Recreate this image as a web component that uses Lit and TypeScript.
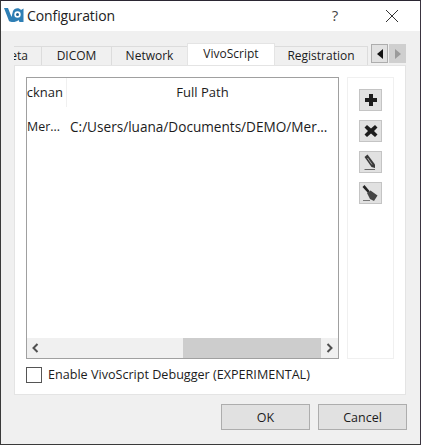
import { LitElement, html, css } from "lit";
import { customElement } from "lit/decorators.js";

@customElement("app-root")
export class AppRoot extends LitElement {
  static styles = css`
    :host { display: block; width: 421px; height: 445px; overflow: hidden; font-family: "Open Sans", "Noto Sans", sans-serif; font-size: 12px; color: #1c1c1c; }
    .win { width: 421px; height: 445px; box-sizing: border-box; background: #f0f0f0; border: 1px solid #3a3a3a; border-top-color: #2b2733; border-right-color: #3a3440; display: flex; flex-direction: column; }
    .title { height: 30px; background: #fff; display: flex; align-items: center; flex: none; padding-bottom: 2px; box-sizing: border-box; }
    .logo { width: 20px; height: 16px; margin-left: 3px; flex: none; }
    .title-text { margin-left: 3px; font-size: 14px; color: #222; flex: 1; letter-spacing: -0.1px; }
    .help { width: 14px; text-align: center; font-size: 15px; color: #444; margin-right: 43px; }
    .close { width: 14px; height: 14px; margin-right: 21px; margin-top: 2px; }
    .body { flex: 1; padding: 12px 14px 13px 13px; display: flex; flex-direction: column; min-height: 0; }
    .strip { height: 22px; display: flex; align-items: flex-end; flex: none; position: relative; }
    .tab { height: 19px; box-sizing: border-box; background: #f0f0f0; border: 1px solid #dcdcdc; border-bottom: 0; display: flex; align-items: center; justify-content: center; flex: none; margin-left: -1px; white-space: nowrap; padding-bottom: 1px; }
    .tab.first { width: 28px; margin-left: 0; border-left: 0; justify-content: flex-end; overflow: hidden; padding-right: 13px; }
    .tab.w70 { width: 71px; }
    .tab.w76 { width: 77px; }
    .tab.active { width: 88px; height: 22px; background: #fff; border-color: #e4e4e4; position: relative; z-index: 1; padding-bottom: 3px; }
    .tab.w93 { width: 94px; }
    .arrows { display: flex; gap: 1px; margin-left: 3px; align-self: flex-start; margin-top: 1px; }
    .arrow { width: 17px; height: 19px; box-sizing: border-box; background: #e1e1e1; border: 1px solid #adadad; display: flex; align-items: center; justify-content: center; }
    .arrow.off { background: #cfcfcf; border-color: #cfcfcf; }
    .panel { width: 392px; flex: none; height: 330px; box-sizing: border-box; background: #fff; border: 1px solid #e4e4e4; padding: 11px 11px 0 11px; display: flex; flex-direction: column; }
    .main { display: flex; gap: 8px; height: 282px; flex: none; }
    .table { width: 314px; box-sizing: border-box; border: 1px solid #a0a0a0; display: flex; flex-direction: column; }
    .rows { flex: 1; min-height: 0; overflow: hidden; }
    .row { display: flex; }
    .head { height: 29px; line-height: 29px; font-size: 13px; }
    .data { height: 39px; line-height: 39px; font-size: 13.6px; }
    .c1 { width: 40px; flex: none; overflow: hidden; display: flex; justify-content: flex-end; white-space: nowrap; box-sizing: border-box; }
    .head .c1 { border-right: 1px solid #f0f0f0; padding-right: 3px; }
    .data .c1 { justify-content: flex-end; padding-right: 7px; font-size: 12.4px; }
    .c2 { flex: 1; text-align: center; white-space: nowrap; overflow: hidden; }
    .data .c2 { text-align: left; padding-left: 3px; }
    .sb { height: 20px; background: #f0f0f0; display: flex; align-items: center; flex: none; }
    .sb-btn { width: 17px; height: 20px; display: flex; align-items: center; justify-content: center; flex: none; }
    .sb-track { flex: 1; display: flex; height: 20px; }
    .sb-space { width: 139px; }
    .sb-thumb { flex: 1; background: #cdcdcd; }
    .side { width: 47px; box-sizing: border-box; border: 1px solid #f0f0f0; padding: 11px 11px; display: flex; flex-direction: column; gap: 9px; }
    .tool { width: 23px; height: 22px; box-sizing: border-box; background: #e1e1e1; border: 1px solid #c4c4c4; display: flex; align-items: center; justify-content: center; }
    .check-row { display: flex; align-items: center; margin-top: 7px; gap: 6px; font-size: 12.6px; }
    .check { width: 16px; height: 16px; box-sizing: border-box; border: 1px solid #555; background: #fff; flex: none; }
    .foot { display: flex; justify-content: flex-end; gap: 8px; margin-top: 9px; margin-right: -1px; font-size: 12.5px; }
    .btn { width: 89px; height: 26px; box-sizing: border-box; background: #e1e1e1; border: 1px solid #adadad; display: flex; align-items: center; justify-content: center; }
  `;

  render() {
    return html`
      <div class="win">
        <div class="title">
          <svg class="logo" viewBox="0 0 20 16">
            <path d="M0 1 L4 1 L7.500 10 L9 4 C10 1 15 0 17 3 L19.500 1.500 L19.500 15 L15.500 15 L14.500 13 C12 15.500 7 15.500 5 14 Z" fill="#2f7fb5"/>
            <circle cx="13.500" cy="7.500" r="3.200" fill="#fff"/>
            <circle cx="13.500" cy="7.500" r="1.500" fill="#1d5f8f"/>
          </svg>
          <span class="title-text">Configuration</span>
          <span class="help">?</span>
          <svg class="close" viewBox="0 0 14 14"><path d="M1 1 L13 13 M13 1 L1 13" stroke="#333" stroke-width="1" fill="none"/></svg>
        </div>
        <div class="body">
          <div class="strip">
            <div class="tab first"><span>Meta</span></div>
            <div class="tab w70">DICOM</div>
            <div class="tab w76">Network</div>
            <div class="tab active">VivoScript</div>
            <div class="tab w93">Registration</div>
            <div class="arrows">
              <div class="arrow"><svg width="6" height="10" viewBox="0 0 6 10"><path d="M6 0 L0 5 L6 10 Z" fill="#111"/></svg></div>
              <div class="arrow off"><svg width="6" height="10" viewBox="0 0 6 10"><path d="M0 0 L6 5 L0 10 Z" fill="#9a9a9a"/></svg></div>
            </div>
          </div>
          <div class="panel">
            <div class="main">
              <div class="table">
                <div class="rows">
                  <div class="row head"><div class="c1"><span>Nicknan</span></div><div class="c2">Full Path</div></div>
                  <div class="row data"><div class="c1"><span>Mer...</span></div><div class="c2">C:/Users/luana/Documents/DEMO/Mer...</div></div>
                </div>
                <div class="sb">
                  <div class="sb-btn"><svg width="7" height="10" viewBox="0 0 7 10"><path d="M5.500 1 L1.500 5 L5.500 9" stroke="#505050" stroke-width="2" fill="none"/></svg></div>
                  <div class="sb-track"><div class="sb-space"></div><div class="sb-thumb"></div></div>
                  <div class="sb-btn"><svg width="7" height="10" viewBox="0 0 7 10"><path d="M1.500 1 L5.500 5 L1.500 9" stroke="#505050" stroke-width="2" fill="none"/></svg></div>
                </div>
              </div>
              <div class="side">
                <div class="tool"><svg width="14" height="14" viewBox="0 0 14 14"><path d="M5 1 H9 V5 H13 V9 H9 V13 H5 V9 H1 V5 H5 Z" fill="#1c1c1c"/></svg></div>
                <div class="tool"><svg width="14" height="14" viewBox="0 0 14 14"><path d="M3 1 L7 4.500 L11 1 L13.500 3.500 L10 7 L13.500 10.500 L11 13 L7 9.500 L3 13 L.5 10.500 L4 7 L.5 3.500 Z" fill="#1c1c1c"/></svg></div>
                <div class="tool"><svg width="21" height="20" viewBox="0 0 21 20"><path d="M4.500 5 L7.500 2.500 L15 12.500 L15 16 L11.500 15 Z" fill="#3a3a3a"/><path d="M7.500 6 L12 12.500" stroke="#bbb" stroke-width=".8"/><path d="M4.500 17.500 H15" stroke="#666" stroke-width="1"/></svg></div>
                <div class="tool"><svg width="21" height="20" viewBox="0 0 21 20"><path d="M2.500 4 L4.500 2 L9.500 8 L8 10 Z" fill="#222"/><path d="M7 10 L10.500 7.500 L17.500 12.500 L14 18 L10 16 Z" fill="#444"/><path d="M3 17.500 H10" stroke="#777" stroke-width="1"/></svg></div>
              </div>
            </div>
            <div class="check-row"><div class="check"></div><span>Enable VivoScript Debugger (EXPERIMENTAL)</span></div>
          </div>
          <div class="foot">
            <div class="btn">OK</div>
            <div class="btn">Cancel</div>
          </div>
        </div>
      </div>
    `;
  }
}
